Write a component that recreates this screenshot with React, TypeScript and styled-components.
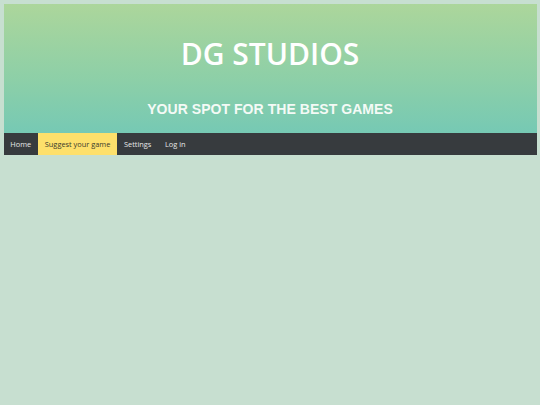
import React from "react";
import styled, { createGlobalStyle } from "styled-components";

const GlobalStyle = createGlobalStyle`
  html, body {
    margin: 0;
    background: #c7dfd0;
  }
  body {
    padding: 3.5px;
  }
`;

const Header = styled.header`
  background: linear-gradient(to bottom, #acd69b 0%, #8ccfa8 60%, #76c9b4 100%);
  padding: 30px 0 16px;
  text-align: center;
`;

const Title = styled.h1`
  margin: 0;
  font-family: "Open Sans", "Liberation Sans", sans-serif;
  font-weight: 600;
  font-size: 30px;
  line-height: 40px;
  color: #ffffff;
`;

const Tagline = styled.h2`
  margin: 27.6px 0 0;
  font-family: "Liberation Sans", Arial, sans-serif;
  font-weight: 700;
  font-size: 14px;
  line-height: 16px;
  letter-spacing: 0.05px;
  color: #f4faf6;
`;

const Nav = styled.nav`
  display: flex;
  height: 22px;
  background: #373b3e;
`;

const NavItem = styled.a<{ active?: boolean }>`
  display: flex;
  align-items: center;
  padding: 0 6.8px;
  font-family: "Open Sans", "DejaVu Sans", sans-serif;
  font-size: 7.4px;
  text-decoration: none;
  color: ${(props) => (props.active ? "#3b3a2c" : "#e6e7e7")};
  background: ${(props) => (props.active ? "#fde06b" : "transparent")};
  cursor: pointer;
`;

const links = ["Home", "Suggest your game", "Settings", "Log in"];

const App = () => {
  return (
    <>
      <GlobalStyle />
      <Header>
        <Title>DG STUDIOS</Title>
        <Tagline>YOUR SPOT FOR THE BEST GAMES</Tagline>
      </Header>
      <Nav>
        {links.map((label) => (
          <NavItem key={label} active={label === "Suggest your game"}>
            {label}
          </NavItem>
        ))}
      </Nav>
    </>
  );
};

export default App;
